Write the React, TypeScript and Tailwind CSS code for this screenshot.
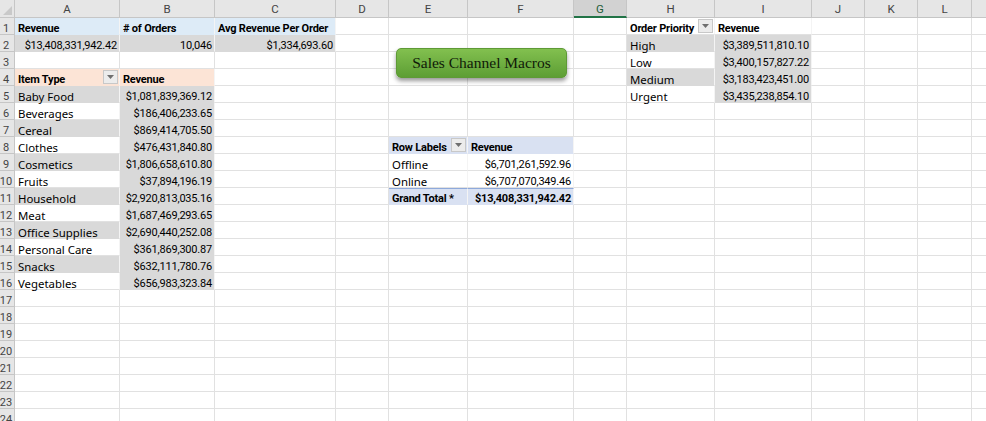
import React from "react";

type Cell = {
  t: string;
  bold?: boolean;
  bg?: string;
  right?: boolean;
  filter?: boolean;
  num?: boolean;
  topBorder?: boolean;
};

const COLS = ["A", "B", "C", "D", "E", "F", "G", "H", "I", "J", "K", "L", "M"];

const BLUE = "bg-[#ddebf7]";
const PEACH = "bg-[#fce4d6]";
const GRAY = "bg-[#d9d9d9]";
const PIV = "bg-[#d9e1f2]";

const data: Record<string, Cell> = {
  A1: { t: "Revenue", bold: true, bg: BLUE },
  B1: { t: "# of Orders", bold: true, bg: BLUE },
  C1: { t: "Avg Revenue Per Order", bold: true, bg: BLUE },
  H1: { t: "Order Priority", bold: true, filter: true },
  I1: { t: "Revenue", bold: true },
  A2: { t: "$13,408,331,942.42", right: true, num: true, bg: GRAY },
  B2: { t: "10,046", right: true, num: true, bg: GRAY },
  C2: { t: "$1,334,693.60", right: true, num: true, bg: GRAY },
  H2: { t: "High", bg: GRAY },
  I2: { t: "$3,389,511,810.10", right: true, num: true, bg: GRAY },
  H3: { t: "Low" },
  I3: { t: "$3,400,157,827.22", right: true, num: true, bg: GRAY },
  A4: { t: "Item Type", bold: true, bg: PEACH, filter: true },
  B4: { t: "Revenue", bold: true, bg: PEACH },
  H4: { t: "Medium", bg: GRAY },
  I4: { t: "$3,183,423,451.00", right: true, num: true, bg: GRAY },
  H5: { t: "Urgent" },
  I5: { t: "$3,435,238,854.10", right: true, num: true, bg: GRAY },
  E8: { t: "Row Labels", bold: true, bg: PIV, filter: true },
  F8: { t: "Revenue", bold: true, bg: PIV },
  E9: { t: "Offline" },
  F9: { t: "$6,701,261,592.96", right: true, num: true },
  E10: { t: "Online" },
  F10: { t: "$6,707,070,349.46", right: true, num: true },
  E11: { t: "Grand Total *", bold: true, bg: PIV, topBorder: true },
  F11: { t: "$13,408,331,942.42", bold: true, right: true, num: true, bg: PIV, topBorder: true },
};

const items: [string, string][] = [
  ["Baby Food", "$1,081,839,369.12"],
  ["Beverages", "$186,406,233.65"],
  ["Cereal", "$869,414,705.50"],
  ["Clothes", "$476,431,840.80"],
  ["Cosmetics", "$1,806,658,610.80"],
  ["Fruits", "$37,894,196.19"],
  ["Household", "$2,920,813,035.16"],
  ["Meat", "$1,687,469,293.65"],
  ["Office Supplies", "$2,690,440,252.08"],
  ["Personal Care", "$361,869,300.87"],
  ["Snacks", "$632,111,780.76"],
  ["Vegetables", "$656,983,323.84"],
];
items.forEach(([name, val], i) => {
  const r = 5 + i;
  data["A" + r] = { t: name, bg: i % 2 === 0 ? GRAY : undefined };
  data["B" + r] = { t: val, right: true, num: true, bg: GRAY };
});

function FilterBtn() {
  return (
    <span className="ml-auto mr-[1px] flex h-[14px] w-[15px] shrink-0 items-center justify-center self-center border border-[#c8c8c8] bg-[#ececec]">
      <svg width="7" height="4" viewBox="0 0 7 4">
        <path d="M0 0 L7 0 L3.5 4 Z" fill="#6f6f6f" />
      </svg>
    </span>
  );
}

function CellView({ c }: { c?: Cell }) {
  if (!c) {
    return <div className="h-[17px] border-b border-r border-[#e1e1e1] bg-white" />;
  }
  const font = c.bold
    ? "font-['Roboto',sans-serif] font-bold text-[11px] tracking-[-0.2px]"
    : c.num
    ? "font-['Roboto',sans-serif] text-[11px] tracking-[-0.2px]"
    : "font-['Noto_Sans',sans-serif] text-[11.4px]";
  const bg = c.bg ?? "bg-white";
  const borderB = c.bg ? "border-b-transparent" : "border-b-[#e1e1e1]";
  const top = c.topBorder ? "border-t border-t-[#8ea9db]" : "";
  return (
    <div
      className={`flex h-[17px] items-end overflow-visible whitespace-nowrap border-b border-r border-r-[#f4f4f4] ${borderB} ${bg} ${top} leading-none text-black ${font} ${
        c.right ? "justify-end pr-[2px]" : "pl-[3px]"
      }`}
    >
      <span className="relative z-10">{c.t}</span>
      {c.filter && <FilterBtn />}
    </div>
  );
}

export default function App() {
  const rows = Array.from({ length: 24 }, (_, i) => i + 1);
  return (
    <div className="relative h-[421px] w-full overflow-hidden bg-white">
      <div className="grid w-[1026px] grid-cols-[15px_105px_95px_121px_53px_79px_106px_53px_88px_97px_53px_53px_54px_54px]">
        {/* corner */}
        <div className="relative h-[18px] border-b border-r border-[#c6c6c6] bg-[#e6e6e6]">
          <svg className="absolute bottom-[2px] right-[2px]" width="9" height="9" viewBox="0 0 9 9">
            <path d="M9 0 L9 9 L0 9 Z" fill="#c9c9c9" />
          </svg>
        </div>
        {COLS.map((col) => (
          <div
            key={col}
            className={`flex h-[18px] items-center justify-center border-r pt-[3px] font-['Roboto',sans-serif] text-[11.5px] leading-none ${
              col === "G"
                ? "border-b-2 border-b-[#217346] border-r-[#c6c6c6] bg-[#d2d2d2] text-[#1e5c38]"
                : "border-b border-[#c6c6c6] bg-[#e6e6e6] text-[#444]"
            }`}
          >
            {col === "M" ? "" : col}
          </div>
        ))}
        {rows.map((r) => (
          <React.Fragment key={r}>
            <div className="relative h-[17px] overflow-hidden border-b border-r border-[#c6c6c6] bg-[#e6e6e6]">
              <div className="ml-[-8px] flex h-full w-[28px] items-end justify-center font-['Roboto',sans-serif] text-[11px] leading-none text-[#444]">
                {r}
              </div>
            </div>
            {COLS.map((col) => (
              <CellView key={col} c={data[col + r]} />
            ))}
          </React.Fragment>
        ))}
      </div>
      <div className="absolute left-[396px] top-[48px] z-20 flex h-[30px] w-[171px] items-center justify-center rounded-[5px] border border-[#5e9a36] bg-gradient-to-b from-[#82c04f] to-[#5d9e34] font-['Liberation_Serif',serif] text-[15.5px] text-[#101a08] shadow-[0_3px_4px_rgba(0,0,0,0.4)]">
        Sales Channel Macros
      </div>
    </div>
  );
}
